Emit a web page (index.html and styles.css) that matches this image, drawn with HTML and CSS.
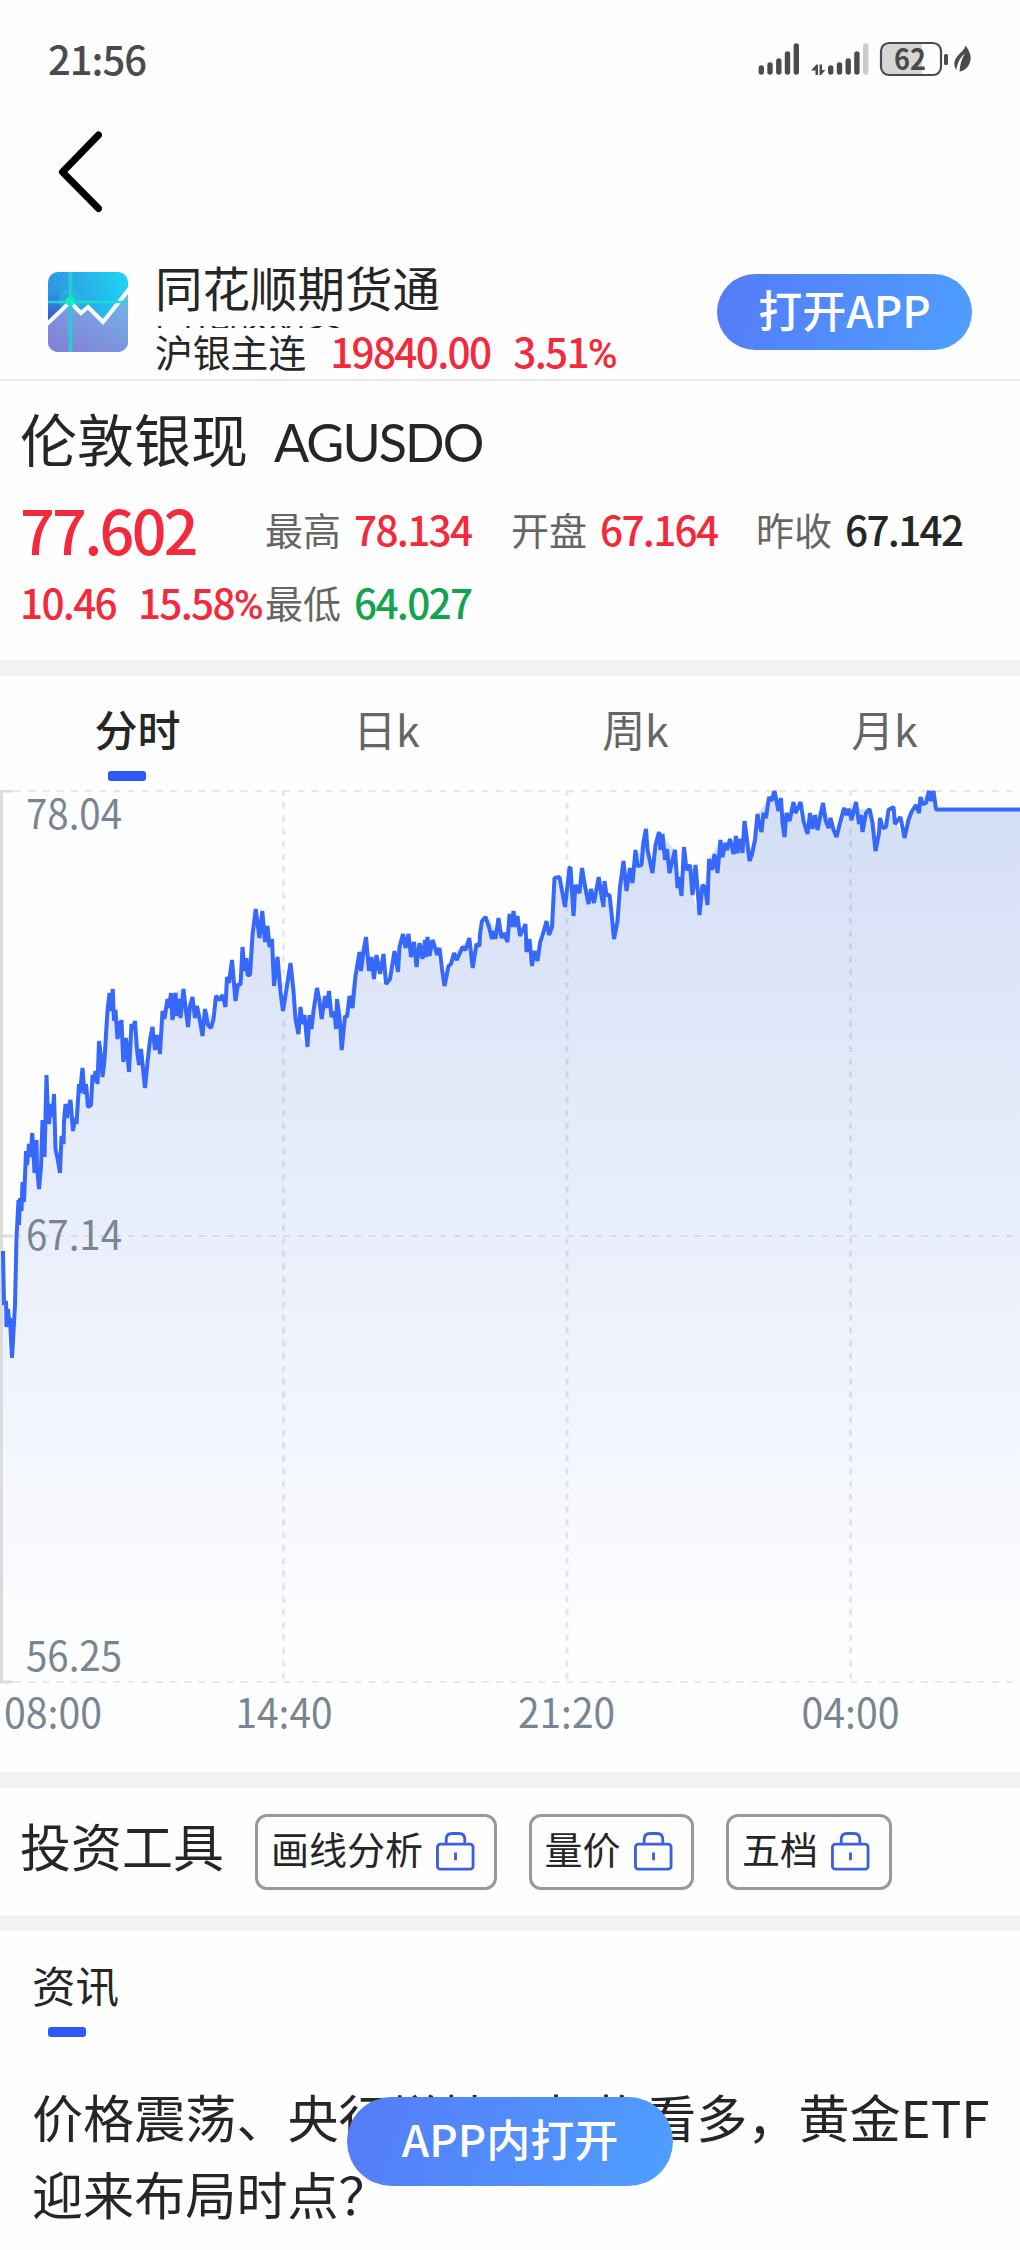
FILE: index.html
```html
<!DOCTYPE html>
<html lang="zh-CN">
<head>
<meta charset="utf-8">
<title>伦敦银现 AGUSDO</title>
<link rel="stylesheet" href="styles.css">
</head>
<body>
<header class="status">
  <span class="clock">21:56</span>
  <svg class="status-icons" width="216" height="38" viewBox="757 40 216 38">
    <g fill="none" stroke="#4b4b4b" stroke-width="5.4" stroke-linecap="round">
      <path d="M761.3 68v4M770 65v7M778.8 61v11M787.5 54v18M796.3 46v26"/>
      <path d="M830.7 68v4M839.5 65v7M848.2 61v11M856.9 54v18"/>
      <path d="M865.7 46v26" stroke="#cacaca"/>
    </g>
    <path d="M811 70.500 816.500 64.500h1.500v10.500h-2.500v-4.500zM819.500 64.500h2.500v5.500h3.500l-4.500 5h-1.500z" fill="#4b4b4b"/>
    <path d="M890 43h32v32h-32a9 9 0 0 1-9-9v-14a9 9 0 0 1 9-9z" fill="#d6d6d6"/>
    <rect x="881" y="43" width="60" height="32" rx="8" fill="none" stroke="#4b4b4b" stroke-width="2.2"/>
    <text class="battery" x="894" y="70" textLength="32" lengthAdjust="spacingAndGlyphs">62</text>
    <rect x="944" y="54" width="4" height="11" rx="1.500" fill="#4b4b4b"/>
    <path d="M965.500 45.500c5 7 6.500 12 4 18-2 5-6 7.500-10 8 .5-7 2-13 5.500-18-5 4-8 10-8.500 16.500-3-4-3-9 1-14 4-4.500 7-6 8-10.500z" fill="#4b4b4b"/>
  </svg>
</header>
<nav class="nav">
  <svg width="44" height="84" viewBox="58 130 44 84"><path d="M98.500 135 62.500 172l36 36.500" fill="none" stroke="#000" stroke-width="7" stroke-linecap="round" stroke-linejoin="round"/></svg>
</nav>
<section class="appbar">
  <svg class="logo" width="80" height="80" viewBox="0 0 80 80">
    <defs>
      <linearGradient id="sky" x1="0" y1="0.5" x2="1" y2="0.2"><stop offset="0" stop-color="#2f8fe0"/><stop offset="1" stop-color="#1fd2f2"/></linearGradient>
      <linearGradient id="hill" x1="0.9" y1="0" x2="0.2" y2="1"><stop offset="0" stop-color="#6fb8ea"/><stop offset="1" stop-color="#8480d8"/></linearGradient>
      <linearGradient id="deep" x1="0" y1="0" x2="0" y2="1"><stop offset="0" stop-color="#2f8fe0"/><stop offset="1" stop-color="#3a52d4"/></linearGradient>
      <clipPath id="round"><rect width="80" height="80" rx="10"/></clipPath>
    </defs>
    <g clip-path="url(#round)">
      <rect width="80" height="80" fill="url(#sky)"/>
      <path d="M0 22h22v20L0 52z" fill="url(#deep)"/>
      <path d="M0 52 22 29l11 12 7-7 15 16 25-33v63H0z" fill="url(#hill)"/>
      <circle cx="22" cy="28" r="11" fill="#20d8d0" opacity=".35"/>
      <path d="M-2 53 22 30l11 11 7-6 15 15 27-34" fill="none" stroke="#fff" stroke-width="4"/>
      <path d="M0 30h80" stroke="#20d8d8" stroke-width="2.500"/>
      <path d="M22.500 0v80" stroke="#2fc8d8" stroke-width="4"/>
      <circle cx="22" cy="29" r="4.500" fill="#10f0b8"/>
    </g>
  </svg>
  <div class="app-info">
    <div class="app-name">同花顺期货通</div>
    <div class="ticker">
      <div class="ticker-prev">同花顺期货</div>
      <div class="ticker-now"><span class="ticker-name">沪银主连</span><span class="num up ticker-price">19840.00</span><span class="num up ticker-rate">3.51<span class="pct">%</span></span></div>
    </div>
  </div>
  <button class="pill open-app">打开APP</button>
</section>
<section class="quote">
  <h1 class="quote-title">伦敦银现<span class="code">AGUSDO</span></h1>
  <div class="quote-grid">
    <span class="num up price">77.602</span>
    <span class="field"><span class="label">最高</span><span class="num up">78.134</span></span>
    <span class="field"><span class="label">开盘</span><span class="num up">67.164</span></span>
    <span class="field"><span class="label">昨收</span><span class="num">67.142</span></span>
    <span class="num up change"><span>10.46</span><span>15.58<span class="pct">%</span></span></span>
    <span class="field"><span class="label">最低</span><span class="num down">64.027</span></span>
  </div>
</section>
<section class="chart-panel">
  <div class="tabs">
    <span class="tab active">分时</span><span class="tab">日k</span><span class="tab">周k</span><span class="tab">月k</span>
  </div>
  <svg class="chart" width="1020" height="982" viewBox="0 790 1020 982">
    <defs><linearGradient id="area" gradientUnits="userSpaceOnUse" x1="0" y1="790" x2="0" y2="1682"><stop offset="0" stop-color="#3464d2" stop-opacity=".21"/><stop offset="1" stop-color="#3f78f0" stop-opacity="0"/></linearGradient></defs>
    <g class="grid">
      <path d="M0 791H1020M0 1236H1020M0 1682H1020" stroke-dasharray="7 7.170"/>
      <path d="M283.500 790V1682M567 790V1682M850.500 790V1682" stroke-dasharray="6 6.800"/>
    </g>
    <path d="M1.500 790V1682M0 791H13M0 1236H13M0 1682H13" class="axis"/>
    <path class="area" d="M3 1251L4 1305 6 1301 6.500 1327 8 1309 9.500 1325 10 1318 12 1358 15 1305 16.500 1238 18.500 1200 19 1225 21.500 1211 22.500 1182 24 1202 26 1151 27 1165 29 1144 30.500 1157 32.300 1133 33.500 1153 34.500 1173 36.500 1140 39 1189 41 1167 42.500 1120 44.500 1157 46.500 1075 49 1124 50.500 1104 52.500 1117 54 1094 55.500 1149 60 1173 61.500 1136 65.500 1104 67 1118 70.500 1100 73 1131 79 1084 82.500 1068 84.500 1094 88 1107 92.500 1075 97.500 1084 99 1041 102.500 1077 104.500 1060 107.500 1010 112.800 989 117.500 1039 121.500 1020 123.300 1062 126 1038 129 1072 131.500 1024 135 1021 139 1065 141 1049 145 1088 147.500 1062 152.500 1027 160 1054 162.500 1011 171 993 183.500 989 188 1027 192.500 997 202.500 1036 205 1009 213.500 1019 216 996 225.500 1007 227 977 232 960 235.500 1001 240.500 985 242.500 947 250 975 252.500 935 255.700 909 265 942 272 939 274 986 277.500 957 283 1011 290.500 963 298.500 1034 307.500 1047 317 988 321.700 1019 329 991 341.700 1050 349.500 996 359.500 952 366 937 374 979 386 984 403 934 416.500 967 432.500 940 444.500 986 454 953 469.300 938 472.700 968 485.500 917 507.500 942 513.500 911 532 966 546.500 921 552 927 554.500 878 559.500 877 565 907 570.500 867 573.500 916 582 868 588.500 904 598.700 877 609.500 895 614 939 620 887 623.500 861 626.500 891 646 829 652.500 873 659 832 675 850 681.500 896 684 847 692.500 895 699.500 915 709 859 720.500 840 742.500 853 744.500 821 749.500 861 757.500 814 774.500 791 784.500 837 793.500 802 807.500 834 823 803 836.500 837 844 808 869.500 809 875.500 851 888.500 810 904.500 838 916 805 929 791 933.500 791 936 809.500H1020V1682H3Z"/>
    <path class="line" d="M3 1251L4 1305 6 1301 6.500 1327 8 1309 9.500 1325 10 1318 12 1358 15 1305 16.500 1238 18.500 1200 19 1225 20 1198 21.500 1211 22.500 1182 24 1202 26 1151 27 1165 29 1144 30.500 1157 32.300 1133 33.500 1153 34.500 1173 36.500 1140 37 1167 39 1189 41 1167 42.500 1120 44.500 1157 46.500 1075 47.500 1104 49 1124 50.500 1104 52.500 1117 54 1094 55.500 1149 57.500 1158 60 1173 61.500 1136 63.500 1144 64 1122 65.500 1104 67 1118 68.500 1107 70.500 1100 73 1131 75 1118 76.500 1124 79 1084 80 1093 82.500 1068 84.500 1094 86 1084 88 1107 91 1105 92.500 1075 94 1082 95.500 1071 97.500 1084 99 1041 101 1057 102.500 1077 104.500 1060 107.500 1010 109.500 993 111 1011 112.800 989 114 1021 115.500 1010 117.500 1039 119 1021 120 1037 121.500 1020 123.300 1062 126 1038 129 1072 131.500 1024 133 1030 135 1021 137 1050 139 1065 141 1049 145 1088 147.500 1062 150 1040 152.500 1027 155 1050 157.500 1035 160 1054 162.500 1011 164.500 1019 167.500 999 169 1008 171 993 172.500 1020 175.500 993 177 1016 179 999 180.500 1018 183.500 989 185.500 1007 188 1027 190 1006 192.500 997 195 1018 197 1006 200 1021 202.500 1036 205 1009 208 1025 211 1028 213.500 1019 216 996 220 1000 222.500 995 225.500 1007 227 977 229 983 232 960 235.500 1001 238 984 240.500 985 242.500 947 244.500 971 246.500 958 247.500 975 250 975 252.500 935 255.700 909 259.500 938 262.300 911 265 942 267.500 926 269.500 947 272 939 274 986 277.500 957 280.500 992 283 1011 286.500 989 290.500 963 293.500 991 295.500 1019 298.500 1034 300.500 1007 302.500 1024 304.500 1015 307.500 1047 309.500 1015 311.500 1029 313.500 1011 317 988 319.500 1001 321.700 1019 325 996 326.500 1008 329 991 331.500 1017 334.500 1012 336 1029 337 999 339.500 1017 341.700 1050 345 1016 347 1017 349.500 996 352.500 1008 355.500 976 359.500 952 361 971 363.500 952 366 937 369 971 371.500 957 374 979 376.500 955 380 974 383.500 954 386 984 390 979 394.500 951 398 972 399.500 947 403 934 405.500 948 408.500 934 411 957 414 942 416.500 967 419.500 943 422.500 959 425 940 426 957 427.500 937 429.500 956 432.500 940 435.500 949 437 955 439.500 948 442 969 444.500 986 448.500 966 451 964 454 953 456.500 960 460 953 462.500 947 465.500 950 469.300 938 472.700 968 476.500 944 479.500 946 480 934 482 921 485.500 917 489 927 492 939 494 931 495.500 939 498.500 918 501.500 938 504 933 507.500 942 509.500 914 511.500 927 513.500 911 516 927 517.500 916 520 936 525.500 924 526.500 952 529.500 939 532 966 534.500 951 537.500 961 540 943 543.500 932 546.500 921 549 935 552 927 554.500 878 559.500 877 565 907 569.500 868 570.500 867 573.500 916 575.500 885 579.500 893 582 868 585 886 588.500 904 591 889 594 903 598.700 877 601.500 896 603.500 907 604.500 881 606.500 895 609.500 895 611.500 913 614 939 617.500 921 620 887 623.500 861 626.500 891 630 868 632.500 883 635.500 850 637.500 866 641.500 865 643.500 842 646 829 647.500 850 652.500 873 655.500 845 659 832 660.500 850 662.500 834 665 860 667 849 669.500 873 675 850 677.500 888 679 877 681.500 896 684 847 686.500 870 690 865 692.500 895 695.500 865 697.500 888 699.500 915 702.500 885 705 887 707.500 905 709 859 712 870 714.500 854 717.500 873 720.500 840 722.500 857 725.500 843 727 850 730 839 733.500 854 736 836 737.500 853 740.500 839 742.500 853 744.500 821 746.500 836 749.500 861 751.500 856 755 840 757.500 814 759 823 761.500 832 763.500 813 766 818 769 797 771.500 801 774.500 791 778.500 811 781 798 782.500 823 784.500 837 786.500 813 789.500 821 793.500 802 795.500 813 798 808 800.500 802 803.500 821 807.500 834 810 813 812.500 829 815 815 817.500 830 823 803 825.500 820 828.500 828 830.500 818 833.500 830 836.500 837 840 823 844 808 846.500 815 849 809 851.500 820 856 802 859 824 861 815 862.500 832 866 813 869.500 809 872.500 823 875.500 851 879 833 880 818 882.500 828 886 827 888.500 810 893.500 807 895 824 900.500 817 904.500 838 908.500 820 911.500 812 916 805 919 813 920.500 797 922.500 804 926 803 929 791 931 801 933.500 791 936 809.500H1020"/>
    <g class="ticks">
      <text x="26" y="829" textLength="96" lengthAdjust="spacingAndGlyphs">78.04</text>
      <text x="26" y="1250" textLength="96" lengthAdjust="spacingAndGlyphs">67.14</text>
      <text x="26" y="1671" textLength="96" lengthAdjust="spacingAndGlyphs">56.25</text>
      <text x="4" y="1728" textLength="98" lengthAdjust="spacingAndGlyphs">08:00</text>
      <text x="235.500" y="1728" textLength="97" lengthAdjust="spacingAndGlyphs">14:40</text>
      <text x="518" y="1728" textLength="97" lengthAdjust="spacingAndGlyphs">21:20</text>
      <text x="801.500" y="1728" textLength="98" lengthAdjust="spacingAndGlyphs">04:00</text>
    </g>
  </svg>
</section>
<section class="tools">
  <h2 class="tools-title">投资工具</h2>
  <span class="chip">画线分析<svg class="lock" viewBox="0 0 40 40"><path d="M10.500 12V7.500q0-6 6-6h7q6 0 6 6V12M20 21v8"/><rect x="1.500" y="12.500" width="36.500" height="25.500" rx="3"/></svg></span>
  <span class="chip">量价<svg class="lock" viewBox="0 0 40 40"><path d="M10.500 12V7.500q0-6 6-6h7q6 0 6 6V12M20 21v8"/><rect x="1.500" y="12.500" width="36.500" height="25.500" rx="3"/></svg></span>
  <span class="chip">五档<svg class="lock" viewBox="0 0 40 40"><path d="M10.500 12V7.500q0-6 6-6h7q6 0 6 6V12M20 21v8"/><rect x="1.500" y="12.500" width="36.500" height="25.500" rx="3"/></svg></span>
</section>
<section class="news">
  <h2 class="news-tab">资讯</h2>
  <p class="headline">价格震荡、央行增持、机构看多，黄金ETF<br>迎来布局时点？</p>
</section>
<button class="pill float-open">APP内打开</button>
</body>
</html>
```
FILE: styles.css
```css
* { box-sizing: border-box; }
body {
  margin: 0;
  width: 1020px;
  height: 2250px;
  overflow: hidden;
  position: relative;
  background: #fefefe;
  color: #262626;
  font-family: "Noto Sans CJK SC", sans-serif;
}
h1, h2, p { margin: 0; font-weight: 400; }
.num { font-size: 40.500px; font-weight: 500; letter-spacing: -1.700px; }
.pct { font-family: Roboto, sans-serif; letter-spacing: 0; }
.up { color: #f4293b; }
.down { color: #12a44e; }

.status { height: 120px; padding: 0 47px 0 48px; display: flex; justify-content: space-between; align-items: flex-start; }
.clock { font-size: 40px; line-height: 48px; color: #4b4b4b; margin-top: 34px; font-weight: 500; letter-spacing: -1px; }
.status-icons { margin-top: 40px; }
.battery { font-size: 29px; font-weight: 700; fill: #4b4b4b; }

.nav { height: 140px; padding: 10px 58px; }

.appbar { height: 121px; border-bottom: 2px solid #e9eaec; padding: 0 48px; display: flex; }
.logo { margin-top: 12px; flex: none; }
.app-info { margin-left: 27px; flex: 1; }
.app-name { font-size: 47.500px; line-height: 60px; margin-top: -3px; }
.ticker { height: 50px; overflow: hidden; margin-top: 9px; }
.ticker-prev { height: 2px; line-height: 35px; overflow: hidden; font-size: 37.500px; display: flex; align-items: flex-end; }
.ticker-now { display: flex; line-height: 46px; font-size: 37.800px; white-space: nowrap; }
.ticker-price { margin-left: 24px; }
.ticker-rate { margin-left: 23px; }

.pill {
  border: 0;
  padding: 0 0 7px;
  color: #fff;
  font: 500 44px "Noto Sans CJK SC", sans-serif;
  background: linear-gradient(110deg, #557bf8, #4e9fff);
}
.open-app { width: 255px; height: 76px; border-radius: 38px; margin-top: 14px; }

.quote { height: 295px; padding: 14px 20px 0; border-bottom: 16px solid #f2f2f2; }
.quote-title { font-size: 57px; line-height: 84px; height: 92px; white-space: nowrap; }
.code { font-family: Lato, sans-serif; font-size: 52px; margin-left: 26px; letter-spacing: -1.900px; }
.quote-grid { display: grid; grid-template-columns: 245px 246px 245px 1fr; grid-template-rows: 83px 63px; }
.quote-grid > * { white-space: nowrap; line-height: 83px; }
.quote-grid .price { font-size: 61px; letter-spacing: -2.700px; }
.quote-grid .change, .quote-grid .change + .field { line-height: 63px; }
.change { display: flex; gap: 22px; }
.field { display: flex; }
.label { color: #666; font-size: 38px; margin-right: 13px; }

.tabs { height: 114px; padding-left: 13px; display: flex; }
.tab { width: 249px; text-align: center; font-size: 43px; line-height: 105px; color: #666; }
.tab.active { color: #262626; font-weight: 500; position: relative; }
.tab.active::after { content: ""; position: absolute; left: 95px; top: 95px; width: 38px; height: 10px; border-radius: 3px; background: #2f58f8; }

.chart { display: block; }
.grid path { fill: none; stroke: #e8e8e8; stroke-width: 2; }
.grid path + path { stroke-width: 3; }
.axis { fill: none; stroke: #dcdcdc; stroke-width: 3; }
.area { fill: url(#area); }
.line { fill: none; stroke: #3568fb; stroke-width: 4; stroke-linejoin: bevel; }
.ticks { font-size: 40.500px; fill: #7a8592; }

.tools { border-top: 16px solid #f2f2f2; border-bottom: 16px solid #f2f2f2; height: 159px; padding: 26px 20px 0; display: flex; }
.tools-title { font-size: 51px; line-height: 70px; width: 235px; white-space: nowrap; margin-top: -4px; }
.chip { height: 76px; border: 3px solid #999; border-radius: 12px; padding: 0 18.500px 0 13px; margin-right: 32px; font-size: 38px; line-height: 62px; display: flex; white-space: nowrap; }
.lock { width: 39px; height: 39px; margin: 15px 0 0 13px; fill: none; stroke: #3c5fe0; stroke-width: 2.900; }

.news { padding: 22px 32px 0; }
.news-tab { font-size: 43.500px; line-height: 64px; height: 142px; position: relative; }
.news-tab::after { content: ""; position: absolute; left: 16px; top: 74px; width: 38px; height: 10px; border-radius: 3px; background: #2f58f8; }
.headline { font-size: 51.100px; line-height: 77px; white-space: nowrap; margin-top: -17px; }

.float-open { position: absolute; left: 347px; top: 2097px; width: 326px; height: 89px; border-radius: 45px; }
```
